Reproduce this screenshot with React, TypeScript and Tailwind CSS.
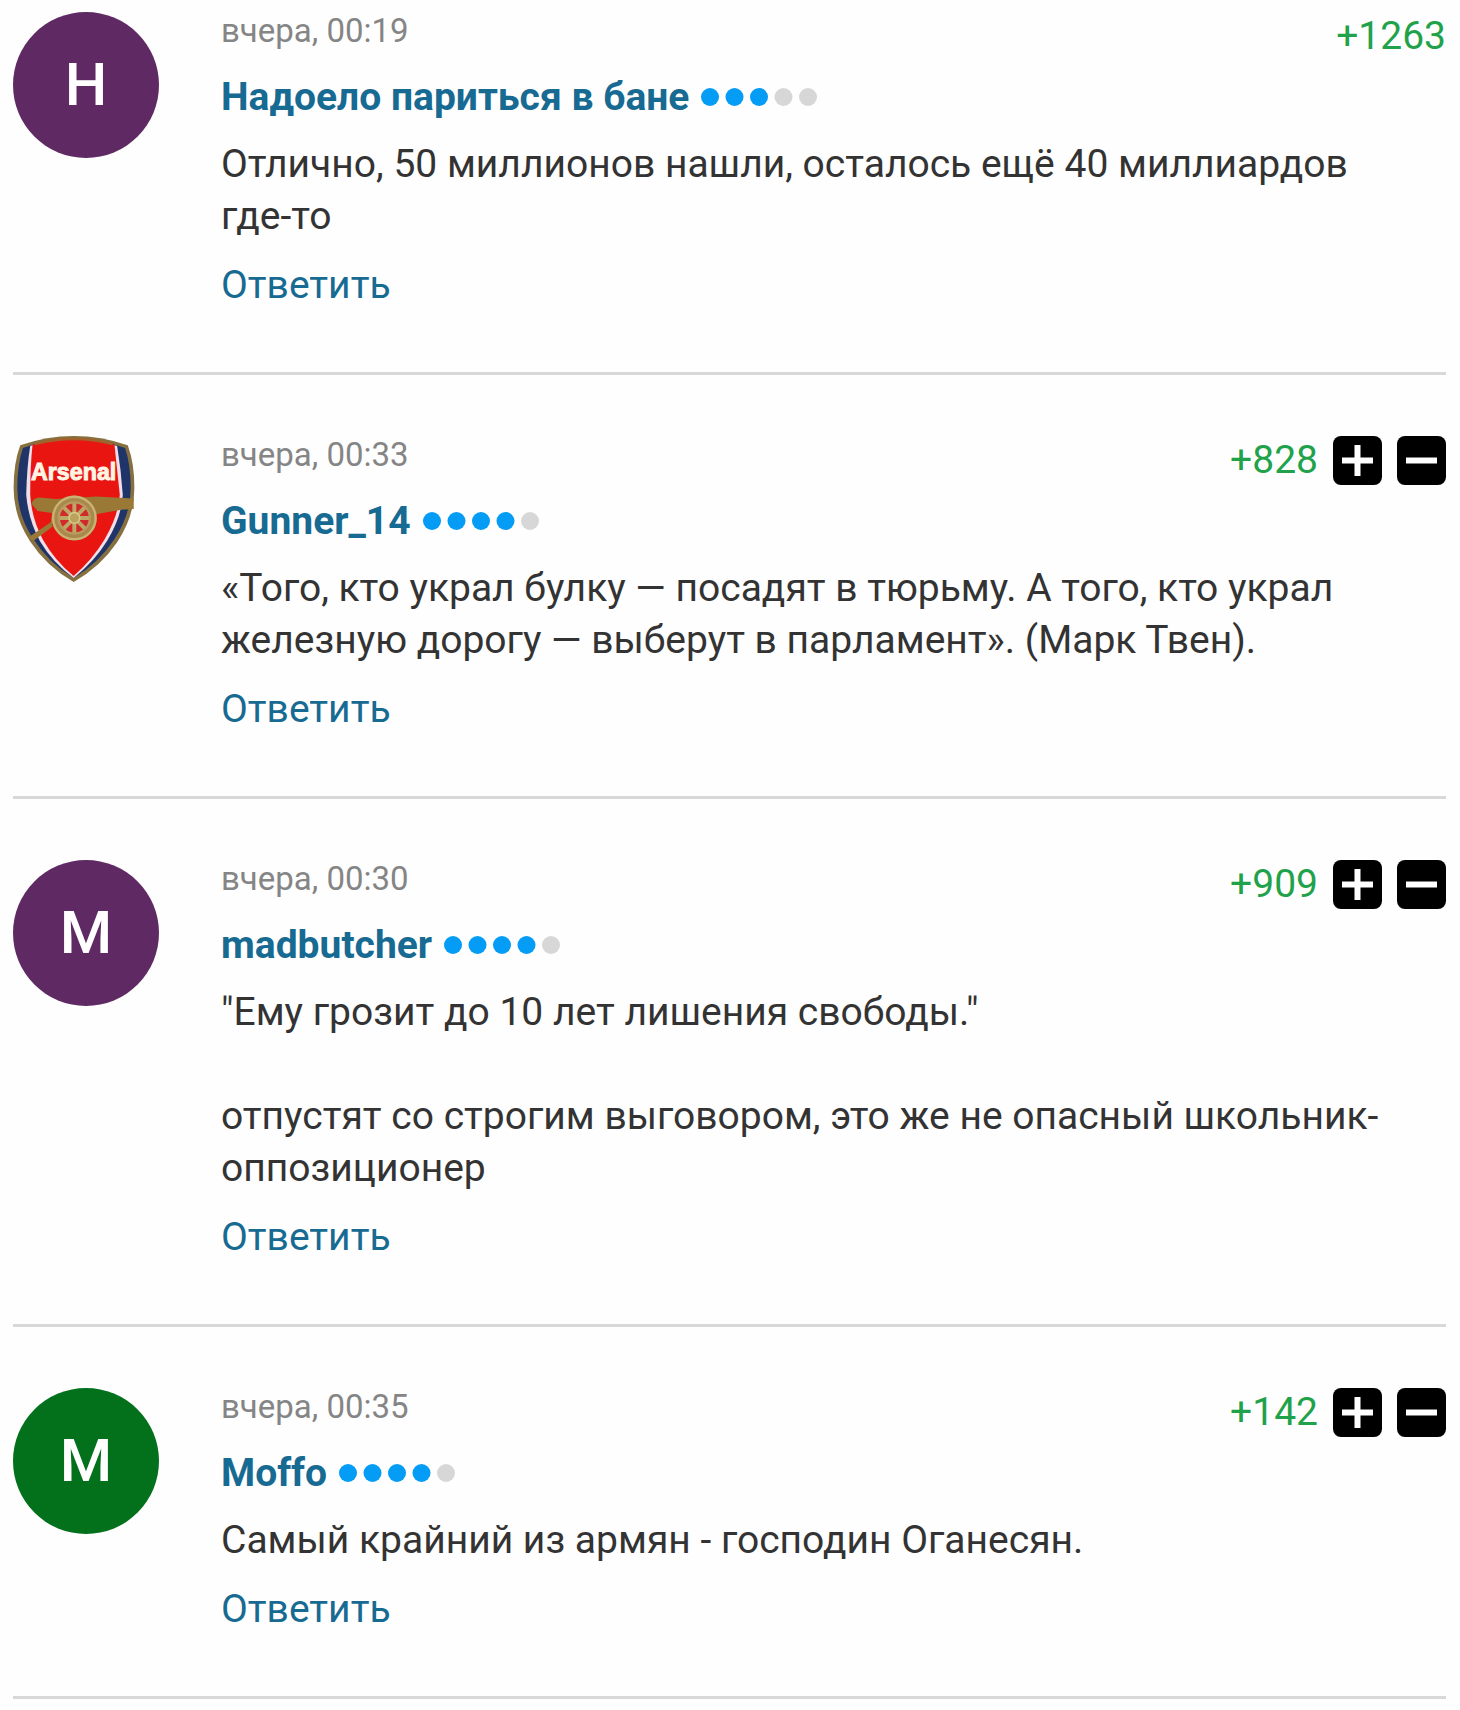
import React from "react";

type Comment = {
  id: string;
  time: string;
  author: string;
  rating: number;
  score: string;
  votable: boolean;
  text: string;
  avatar: { kind: "letter"; letter: string; tone: string } | { kind: "crest" };
};

const comments: Comment[] = [
  {
    id: "c1",
    time: "вчера, 00:19",
    author: "Надоело париться в бане",
    rating: 3,
    score: "+1263",
    votable: false,
    text: "Отлично, 50 миллионов нашли, осталось ещё 40 миллиардов где-то",
    avatar: { kind: "letter", letter: "Н", tone: "bg-[#5f2a63]" },
  },
  {
    id: "c2",
    time: "вчера, 00:33",
    author: "Gunner_14",
    rating: 4,
    score: "+828",
    votable: true,
    text: "«Того, кто украл булку — посадят в тюрьму. А того, кто украл железную дорогу — выберут в парламент». (Марк Твен).",
    avatar: { kind: "crest" },
  },
  {
    id: "c3",
    time: "вчера, 00:30",
    author: "madbutcher",
    rating: 4,
    score: "+909",
    votable: true,
    text: "\"Ему грозит до 10 лет лишения свободы.\"\n\nотпустят со строгим выговором, это же не опасный школьник-оппозиционер",
    avatar: { kind: "letter", letter: "M", tone: "bg-[#5f2a63]" },
  },
  {
    id: "c4",
    time: "вчера, 00:35",
    author: "Moffo",
    rating: 4,
    score: "+142",
    votable: true,
    text: "Самый крайний из армян - господин Оганесян.",
    avatar: { kind: "letter", letter: "M", tone: "bg-[#03701c]" },
  },
];

function Crest() {
  return (
    <svg viewBox="39 48 366 440" className="h-[146px] w-[122px]" role="img" aria-label="Arsenal">
      <path d="M60 76 Q140 48 221 48 Q304 48 384 76 Q404 130 404 205 Q404 290 352 368 Q302 442 221 488 Q140 442 90 366 Q40 290 40 205 Q40 130 60 76Z" fill="#86703f" />
      <path d="M68 84 Q140 58 221 58 Q304 58 376 84 Q393 135 393 205 Q393 285 343 360 Q296 432 221 476 Q146 432 99 358 Q51 285 51 205 Q51 135 68 84Z" fill="#1f3468" />
      <path d="M90 78 Q156 58 221 58 Q286 58 352 78 Q364 150 369 225 Q366 290 322 364 Q284 426 221 476 Q158 430 120 366 Q84 300 78 225 Q80 140 90 78Z" fill="#f1dfe9" />
      <path d="M97 74 Q160 58 221 58 Q284 58 344 74 Q352 150 360 225 Q356 288 314 360 Q278 420 221 470 Q164 424 128 360 Q94 296 90 225 Q90 140 97 74Z" fill="#e91511" />
      <path d="M104 72 Q165 57 221 57 Q280 57 338 72" fill="none" stroke="#a3622c" strokeWidth="8" />
      <path d="M94 252 Q100 233 118 233 L168 238 L288 230 L402 236 L402 268 L364 270 L288 284 L160 296 L156 322 L100 364 L84 354 L152 308 L156 280 L112 274Z" fill="#9a7835" />
      <circle cx="223" cy="295" r="68" fill="#a8884c" />
      <circle cx="223" cy="295" r="64" fill="none" stroke="#c9b274" strokeWidth="7" />
      <circle cx="223" cy="295" r="45" fill="#d02a2c" />
      <path d="M223 250V340M178 295H268M191 263L255 327M255 263L191 327" stroke="#bda765" strokeWidth="12" />
      <circle cx="223" cy="295" r="47" fill="none" stroke="#b79c5c" strokeWidth="7" />
      <circle cx="223" cy="295" r="16" fill="#b8a25c" stroke="#d8c68a" strokeWidth="5" />
      <text x="221" y="182" textAnchor="middle" fontFamily="Liberation Sans, sans-serif" fontWeight="700" fontSize="70" fill="#fff3e2" stroke="#fff3e2" strokeWidth="3">
        Arsenal
      </text>
    </svg>
  );
}

function Avatar({ avatar }: { avatar: Comment["avatar"] }) {
  if (avatar.kind === "crest") return <Crest />;
  return (
    <div className={`flex size-[146px] items-center justify-center rounded-full text-[60px] font-medium text-white ${avatar.tone}`}>
      {avatar.letter}
    </div>
  );
}

function Rating({ value }: { value: number }) {
  return (
    <svg viewBox="0 0 116 18" className="h-[18px] w-[116px] shrink-0" role="img" aria-label={`${value} / 5`}>
      {[9, 33.5, 58, 82.5, 107].map((cx, i) => (
        <circle key={cx} cx={cx} cy="9" r="9" fill={i < value ? "#049cf4" : "#d7d7d7"} />
      ))}
    </svg>
  );
}

function VoteButton({ label, path }: { label: string; path: string }) {
  return (
    <button type="button" aria-label={label} className="size-[49px] cursor-pointer rounded-lg bg-black">
      <svg viewBox="0 0 49 49" className="size-full" stroke="#fff" strokeWidth="6" fill="none">
        <path d={path} />
      </svg>
    </button>
  );
}

function CommentRow({ comment }: { comment: Comment }) {
  return (
    <article className="flex border-b-3 border-[#d8d8d8] pb-[61px]">
      <div className="w-[208px] shrink-0">
        <Avatar avatar={comment.avatar} />
      </div>
      <div className="min-w-0 flex-1">
        <div className="flex h-[59px] items-start justify-between">
          <time className="text-[33px] leading-[38px] text-[#858585]">{comment.time}</time>
          <div className="flex items-start gap-[15px]">
            <span className="text-[39px] leading-[48px] text-[#1fa24a]">{comment.score}</span>
            {comment.votable && (
              <>
                <VoteButton label="Плюс" path="M9 24.5H40M24.5 9V40" />
                <VoteButton label="Минус" path="M9 24.5H40" />
              </>
            )}
          </div>
        </div>
        <div className="flex items-center gap-3">
          <a href="#author" className="text-[39px] leading-[52px] font-bold text-[#176a92]">
            {comment.author}
          </a>
          <Rating value={comment.rating} />
        </div>
        <p className="mt-[15px] pr-10 text-[39px] leading-[52px] whitespace-pre-line text-[#333333]">{comment.text}</p>
        <button type="button" className="mt-[17px] block cursor-pointer text-[39px] leading-[52px] text-[#176a92]">
          Ответить
        </button>
      </div>
    </article>
  );
}

export default function App() {
  return (
    <main className="flex min-h-screen flex-col gap-[61px] bg-[#fefefe] pt-3 pr-[14px] pl-[13px] font-['Roboto',sans-serif]">
      {comments.map((c) => (
        <CommentRow key={c.id} comment={c} />
      ))}
    </main>
  );
}
